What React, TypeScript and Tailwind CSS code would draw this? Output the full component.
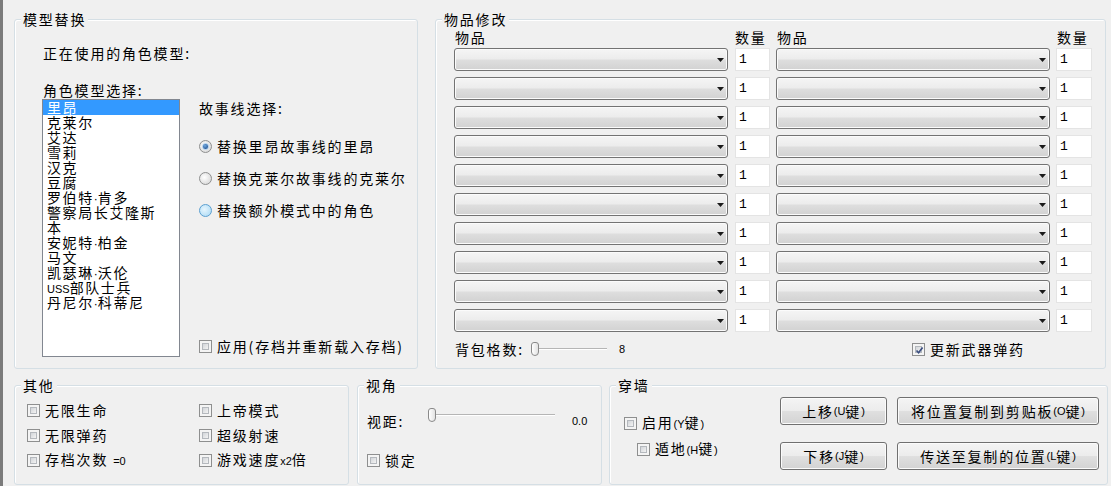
import type { ReactNode } from "react";

const characters = [
  "里昂",
  "克莱尔",
  "艾达",
  "雪莉",
  "汉克",
  "豆腐",
  "罗伯特·肯多",
  "警察局长艾隆斯",
  "本",
  "安妮特·柏金",
  "马文",
  "凯瑟琳·沃伦",
  "USS部队士兵",
  "丹尼尔·科蒂尼",
];

const label = "text-[14px] leading-[18px] tracking-[1.8px] whitespace-nowrap";

function Small({ children }: { children: ReactNode }) {
  return (
    <span className="font-['Liberation_Sans',sans-serif] text-[11px] tracking-normal">
      {children}
    </span>
  );
}

// latin bits (USS, middle dot) are drawn in a smaller latin face, as in the original
function ItemName({ name }: { name: string }) {
  if (name.startsWith("USS")) {
    return (
      <>
        <Small>USS</Small>
        {name.slice(3)}
      </>
    );
  }

  const parts = name.split("·");

  if (parts.length === 1) return <>{name}</>;

  return (
    <>
      {parts[0]}
      <span className="font-['Liberation_Sans',sans-serif] text-[12px] tracking-normal">
        ·
      </span>
      {parts[1]}
    </>
  );
}

function GroupBox({
  title,
  className,
  children,
}: {
  title: string;
  className: string;
  children: ReactNode;
}) {
  return (
    <fieldset
      className={`border border-[#d5dfe5] rounded-[3px] min-w-0 shadow-[inset_1px_1px_0_#ffffff] ${className}`}
    >
      <legend className={`ml-[6px] px-[2px] bg-[#f0f0f0] ${label}`}>
        {title}
      </legend>
      {children}
    </fieldset>
  );
}

function Check({
  checked = false,
  children,
}: {
  checked?: boolean;
  children: ReactNode;
}) {
  return (
    <div className="flex items-center h-[18px]">
      <span className="w-[13px] h-[13px] shrink-0 border border-[#8e8f8f] bg-[#f4f4f4] p-[2px]">
        <span className="relative block w-full h-full border border-[#b4b8bd] bg-[linear-gradient(135deg,#d2d5d9,#f3f3f3)]">
          {checked && (
            <svg
              viewBox="0 0 9 9"
              className="absolute -left-[1px] -top-[1px] w-[9px] h-[9px]"
            >
              <path
                d="M1.5 4.5 L3.6 6.8 L7.6 1.6"
                fill="none"
                stroke="#3c4f80"
                strokeWidth="1.7"
              />
            </svg>
          )}
        </span>
      </span>
      <span className={`ml-[5px] ${label}`}>{children}</span>
    </div>
  );
}

function Radio({
  state,
  children,
}: {
  state: "on" | "off" | "hover";
  children: ReactNode;
}) {
  const ring =
    state === "hover"
      ? "border-[#5b9fd0] bg-[radial-gradient(circle_at_40%_40%,#e6f5fd,#a6d8f5)]"
      : "border-[#8e8f8f] bg-[radial-gradient(circle_at_40%_40%,#ffffff,#d0d0d0)]";

  return (
    <div className="flex items-center h-[18px]">
      <span
        className={`w-[13px] h-[13px] shrink-0 rounded-full border flex items-center justify-center ${ring}`}
      >
        {state === "on" && (
          <span className="w-[7px] h-[7px] rounded-full border border-[#a9cdee] bg-[radial-gradient(circle_at_40%_35%,#6fa8e0,#14407e)]" />
        )}
      </span>
      <span className={`ml-[5px] ${label}`}>{children}</span>
    </div>
  );
}

function Combo() {
  return (
    <div className="w-[274px] h-[23px] shrink-0 rounded-[3px] border border-[#737373] bg-[linear-gradient(to_bottom,#f5f5f5_0%,#ececec_48%,#dedede_52%,#d2d2d2_100%)] shadow-[inset_0_0_0_1px_#fbfbfb] flex items-center justify-end pr-[3px]">
      <svg width="7" height="4" viewBox="0 0 7 4" className="mt-[1px]">
        <path d="M0 0 H7 L3.5 4 Z" fill="#1a1a1a" />
      </svg>
    </div>
  );
}

function NumBox({ className }: { className: string }) {
  return (
    <div
      className={`h-[23px] shrink-0 bg-white border border-[#e4e4e4] pl-[3px] font-['Liberation_Mono',monospace] text-[13px] leading-[21px] ${className}`}
    >
      1
    </div>
  );
}

function Slider({ className }: { className: string }) {
  return (
    <div className={`flex items-center shrink-0 ${className}`}>
      <span className="w-[8px] h-[14px] shrink-0 border border-[#8a8a8a] rounded-t-[3px] rounded-b-[4px] bg-[linear-gradient(to_right,#ffffff,#e2e2e2)]" />
      <span className="flex-1 h-[2px] border-t border-[#b5b5b5] bg-white" />
    </div>
  );
}

function Btn({ children }: { children: ReactNode }) {
  return (
    <div
      className={`h-[28px] rounded-[3px] border border-[#707070] bg-[linear-gradient(to_bottom,#f4f4f4_0%,#ececec_48%,#dfdfdf_52%,#d3d3d3_100%)] shadow-[inset_0_0_0_1px_#fbfbfb] flex items-center justify-center ${label}`}
    >
      {children}
    </div>
  );
}

export default function App() {
  return (
    <div className="w-[1111px] h-[486px] overflow-hidden bg-[#f0f0f0] border-l-[3px] border-[#7b7b7b] pl-[11px] pt-[10px] text-black font-['Noto_Sans_CJK_SC',sans-serif]">

      <div className="flex gap-[17px]">

        <GroupBox title="模型替换" className="w-[404px] h-[359px]">
          <div className="pl-[28px]">

            <div className={`mt-[16px] ${label}`}>正在使用的角色模型:</div>

            <div className={`mt-[19px] ${label}`}>角色模型选择:</div>

            <div className="flex">

              <div className="-ml-px w-[138px] h-[258px] shrink-0 border border-[#828790] bg-white">
                {characters.map((name, i) => (
                  <div
                    key={name}
                    className={`h-[15px] leading-[15px] px-[4px] text-[14px] tracking-[1.6px] whitespace-nowrap ${
                      i === 0 ? "bg-[#3399ff] text-white" : ""
                    }`}
                  >
                    <ItemName name={name} />
                  </div>
                ))}
              </div>

              <div className="ml-[19px]">
                <div className={label}>故事线选择:</div>

                <div className="mt-[20px] flex flex-col gap-[14px]">
                  <Radio state="on">替换里昂故事线的里昂</Radio>
                  <Radio state="off">替换克莱尔故事线的克莱尔</Radio>
                  <Radio state="hover">替换额外模式中的角色</Radio>
                </div>

                <div className="mt-[118px]">
                  <Check>应用(存档并重新载入存档)</Check>
                </div>
              </div>

            </div>
          </div>
        </GroupBox>

        <GroupBox title="物品修改" className="w-[671px] h-[359px]">
          <div className="pl-[18px]">

            <div className={`flex ${label}`}>
              <span className="pl-px w-[281px]">物品</span>
              <span className="w-[42px]">数量</span>
              <span className="w-[280px]">物品</span>
              <span>数量</span>
            </div>

            <div className="mt-[2px] flex flex-col gap-[6px]">
              {Array.from({ length: 10 }).map((_, i) => (
                <div key={i} className="flex">
                  <Combo />
                  <NumBox className="ml-[7px] w-[35px]" />
                  <div className="ml-[6px]">
                    <Combo />
                  </div>
                  <NumBox className="ml-[6px] w-[36px]" />
                </div>
              ))}
            </div>

            <div className="mt-[8px] flex items-center h-[18px]">
              <div className="w-[458px] flex items-center">
                <span className={`pl-px w-[77px] ${label}`}>背包格数:</span>
                <Slider className="w-[76px]" />
                <span className="ml-[12px] font-['Liberation_Sans',sans-serif] text-[11px]">
                  8
                </span>
              </div>
              <Check checked>更新武器弹药</Check>
            </div>

          </div>
        </GroupBox>

      </div>

      <div className="flex mt-[7px]">

        <GroupBox title="其他" className="w-[335px] h-[109px]">
          <div className="pl-[12px] pt-[7px] grid grid-cols-[172px_1fr] gap-y-[7px]">
            <Check>无限生命</Check>
            <Check>上帝模式</Check>
            <Check>无限弹药</Check>
            <Check>超级射速</Check>
            <Check>
              存档次数 <Small>=0</Small>
            </Check>
            <Check>
              游戏速度<Small>x2</Small>倍
            </Check>
          </div>
        </GroupBox>

        <GroupBox title="视角" className="ml-[8px] w-[245px] h-[109px]">
          <div className="pl-[9px]">
            <div className="mt-[18px] flex items-center h-[18px]">
              <span className={`w-[61px] ${label}`}>视距:</span>
              <Slider className="w-[127px] mb-[12px]" />
              <span className="ml-[17px] font-['Liberation_Sans',sans-serif] text-[11px]">
                0.0
              </span>
            </div>
            <div className="mt-[21px]">
              <Check>锁定</Check>
            </div>
          </div>
        </GroupBox>

        <GroupBox title="穿墙" className="ml-[7px] w-[499px] h-[109px]">
          <div className="pl-[14px] flex">

            <div className="w-[156px] pt-[20px] flex flex-col gap-[8px]">
              <Check>
                启用<Small>(Y</Small>键<Small>)</Small>
              </Check>
              <div className="ml-[13px]">
                <Check>
                  遁地<Small>(H</Small>键<Small>)</Small>
                </Check>
              </div>
            </div>

            <div className="pt-[3px] grid grid-cols-[107px_202px] gap-x-[10px] gap-y-[17px]">
              <Btn>
                上移<Small>(U</Small>键<Small>)</Small>
              </Btn>
              <Btn>
                将位置复制到剪贴板<Small>(O</Small>键<Small>)</Small>
              </Btn>
              <Btn>
                下移<Small>(J</Small>键<Small>)</Small>
              </Btn>
              <Btn>
                传送至复制的位置<Small>(L</Small>键<Small>)</Small>
              </Btn>
            </div>

          </div>
        </GroupBox>

      </div>

    </div>
  );
}
